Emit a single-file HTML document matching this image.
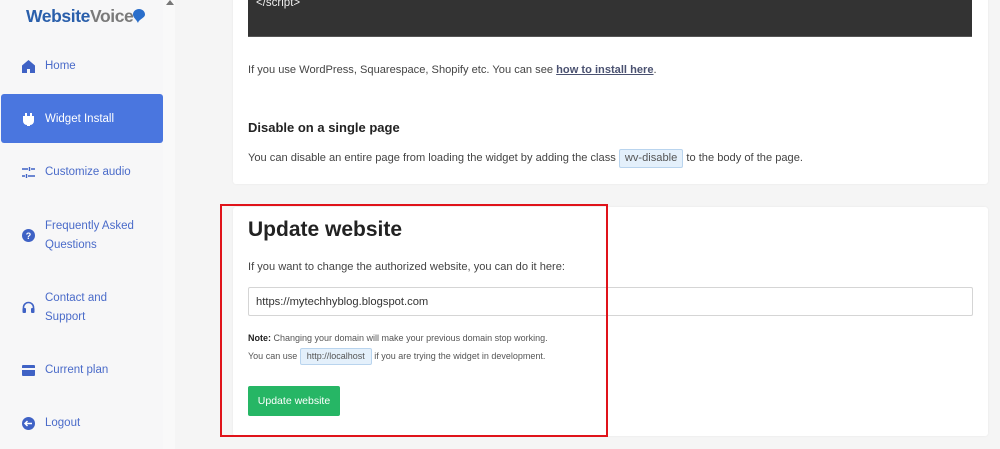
<!DOCTYPE html>
<html><head><style>
*{box-sizing:border-box;margin:0;padding:0}
body{width:1000px;height:449px;overflow:hidden;background:#f5f5f5;font-family:"Liberation Sans",sans-serif;position:relative}
.side{position:absolute;left:0;top:0;width:163px;height:449px;background:#f7f7f8}
.sb{position:absolute;left:163px;top:0;width:12px;height:449px;background:#f9f9f9}
.logo{position:absolute;left:26px;top:6px;font-weight:bold;font-size:17.5px;color:#2a5fab;letter-spacing:-0.4px}
.logo span{color:#7a7a7a}
.item{position:absolute;left:22px;color:#4a6bc9;font-size:11.5px;line-height:19px}
.item .t{position:absolute;left:23px;white-space:nowrap}
.ic{position:absolute;left:0;width:13px;height:13px}
.active{position:absolute;left:1px;top:94px;width:162px;height:49px;background:#4a76df;border-radius:3px}
.card{position:absolute;left:233px;width:755px;background:#fff;border-radius:3px;box-shadow:0 0 2px rgba(0,0,0,.06)}
.p{position:absolute;left:248px;font-size:11.1px;color:#444;white-space:nowrap}
.code{display:inline-block;background:#e4f0fb;border:1px solid #b9d4ee;border-radius:2px;color:#555;padding:0 5px;line-height:17px}
</style></head><body>
<div class="side"></div><div class="sb"><div style="position:absolute;left:3px;top:0;width:0;height:0;border-left:4px solid transparent;border-right:4px solid transparent;border-bottom:5px solid #777"></div></div>
<div class="logo">Website<span>Voice</span><svg width="12" height="14" viewBox="0 0 12 14" style="vertical-align:-1px"><path d="M6 0C2.5 0 0 2.5 0 5.5 0 8.5 3 10 5 14 6 10 12 9 12 5.5 12 2.5 9.5 0 6 0z" fill="#2a6ecb"/></svg></div>
<div class="active"></div>
<div class="item" style="top:57px"><svg class="ic" style="top:3px" viewBox="0 0 13 13"><path d="M6.5 0L0 5.5V13h5V9h3v4h5V5.5z" fill="#3f62c5"/></svg><span class="t">Home</span></div>
<div class="item" style="top:110px;color:#fff"><svg class="ic" style="top:3px" viewBox="0 0 13 13"><path d="M3 0h2v3h3V0h2v3h2v5a4 4 0 0 1-4 4v1H5v-1A4 4 0 0 1 1 8V3h2z" fill="#fff"/></svg><span class="t">Widget Install</span></div>
<div class="item" style="top:163px"><svg class="ic" style="top:3px" viewBox="0 0 13 13"><path d="M0 3h6M9 3h4M7.5 1v4M0 10h3M6 10h7M4.5 8v4" stroke="#3f62c5" stroke-width="1.4"/></svg><span class="t">Customize audio</span></div>
<div class="item" style="top:217px"><svg class="ic" style="top:12px" viewBox="0 0 13 13"><circle cx="6.5" cy="6.5" r="6.5" fill="#3f62c5"/><text x="6.5" y="10" font-size="9" font-weight="bold" fill="#fff" text-anchor="middle" font-family="Liberation Sans">?</text></svg><span class="t">Frequently Asked<br>Questions</span></div>
<div class="item" style="top:289px"><svg class="ic" style="top:12px" viewBox="0 0 13 13"><path d="M1.5 8V6.5a5 5 0 0 1 10 0V8" stroke="#3f62c5" stroke-width="1.6" fill="none"/><rect x="0.5" y="7" width="3.5" height="5" rx="1" fill="#3f62c5"/><rect x="9" y="7" width="3.5" height="5" rx="1" fill="#3f62c5"/></svg><span class="t">Contact and<br>Support</span></div>
<div class="item" style="top:361px"><svg class="ic" style="top:3px" viewBox="0 0 13 13"><rect x="0" y="1" width="13" height="11" rx="1" fill="#3f62c5"/><rect x="0" y="4" width="13" height="2" fill="#f7f7f8"/></svg><span class="t">Current plan</span></div>
<div class="item" style="top:414px"><svg class="ic" style="top:3px" viewBox="0 0 13 13"><circle cx="6.5" cy="6.5" r="6.5" fill="#3f62c5"/><path d="M3 6.5h7M5.5 4L3 6.5 5.5 9" stroke="#fff" stroke-width="1.5" fill="none"/></svg><span class="t">Logout</span></div>

<div class="card" style="top:-5px;height:189px"></div>
<div style="position:absolute;left:248px;top:0;width:724px;height:37px;background:#333;border-bottom:1px solid #555"><div style="position:absolute;left:8px;top:-3px;color:#eee;font-size:11.5px">&lt;/script&gt;</div></div>
<div class="p" style="top:64px">If you use WordPress, Squarespace, Shopify etc. You can see <b style="text-decoration:underline;color:#4a5170">how to install here</b>.</div>
<div class="p" style="top:120px;font-size:13px;font-weight:bold;color:#222">Disable on a single page</div>
<div class="p" style="top:148px;line-height:20px">You can disable an entire page from loading the widget by adding the class <span class="code">wv-disable</span> to the body of the page.</div>

<div class="card" style="top:207px;height:229px"></div>
<div class="p" style="top:218px;font-size:21px;font-weight:bold;color:#222">Update website</div>
<div class="p" style="top:261px">If you want to change the authorized website, you can do it here:</div>
<div style="position:absolute;left:248px;top:287px;width:725px;height:29px;border:1px solid #d5d5d5;border-radius:2px;font-size:11.2px;color:#333;padding:8px 7px">https://mytechhyblog.blogspot.com</div>
<div class="p" style="top:333px;font-size:9px;color:#555"><b style="color:#222">Note:</b> Changing your domain will make your previous domain stop working.</div>
<div class="p" style="top:348px;font-size:9px;color:#555;line-height:16px">You can use <span class="code" style="padding:0 6px;line-height:15px">http://localhost</span> if you are trying the widget in development.</div>
<div style="position:absolute;left:248px;top:386px;width:92px;height:30px;background:#26b665;border-radius:2px;color:#fff;font-size:10.5px;text-align:center;line-height:30px">Update website</div>

<div style="position:absolute;left:220px;top:204px;width:388px;height:233px;border:2.5px solid #e0131a"></div>
</body></html>
